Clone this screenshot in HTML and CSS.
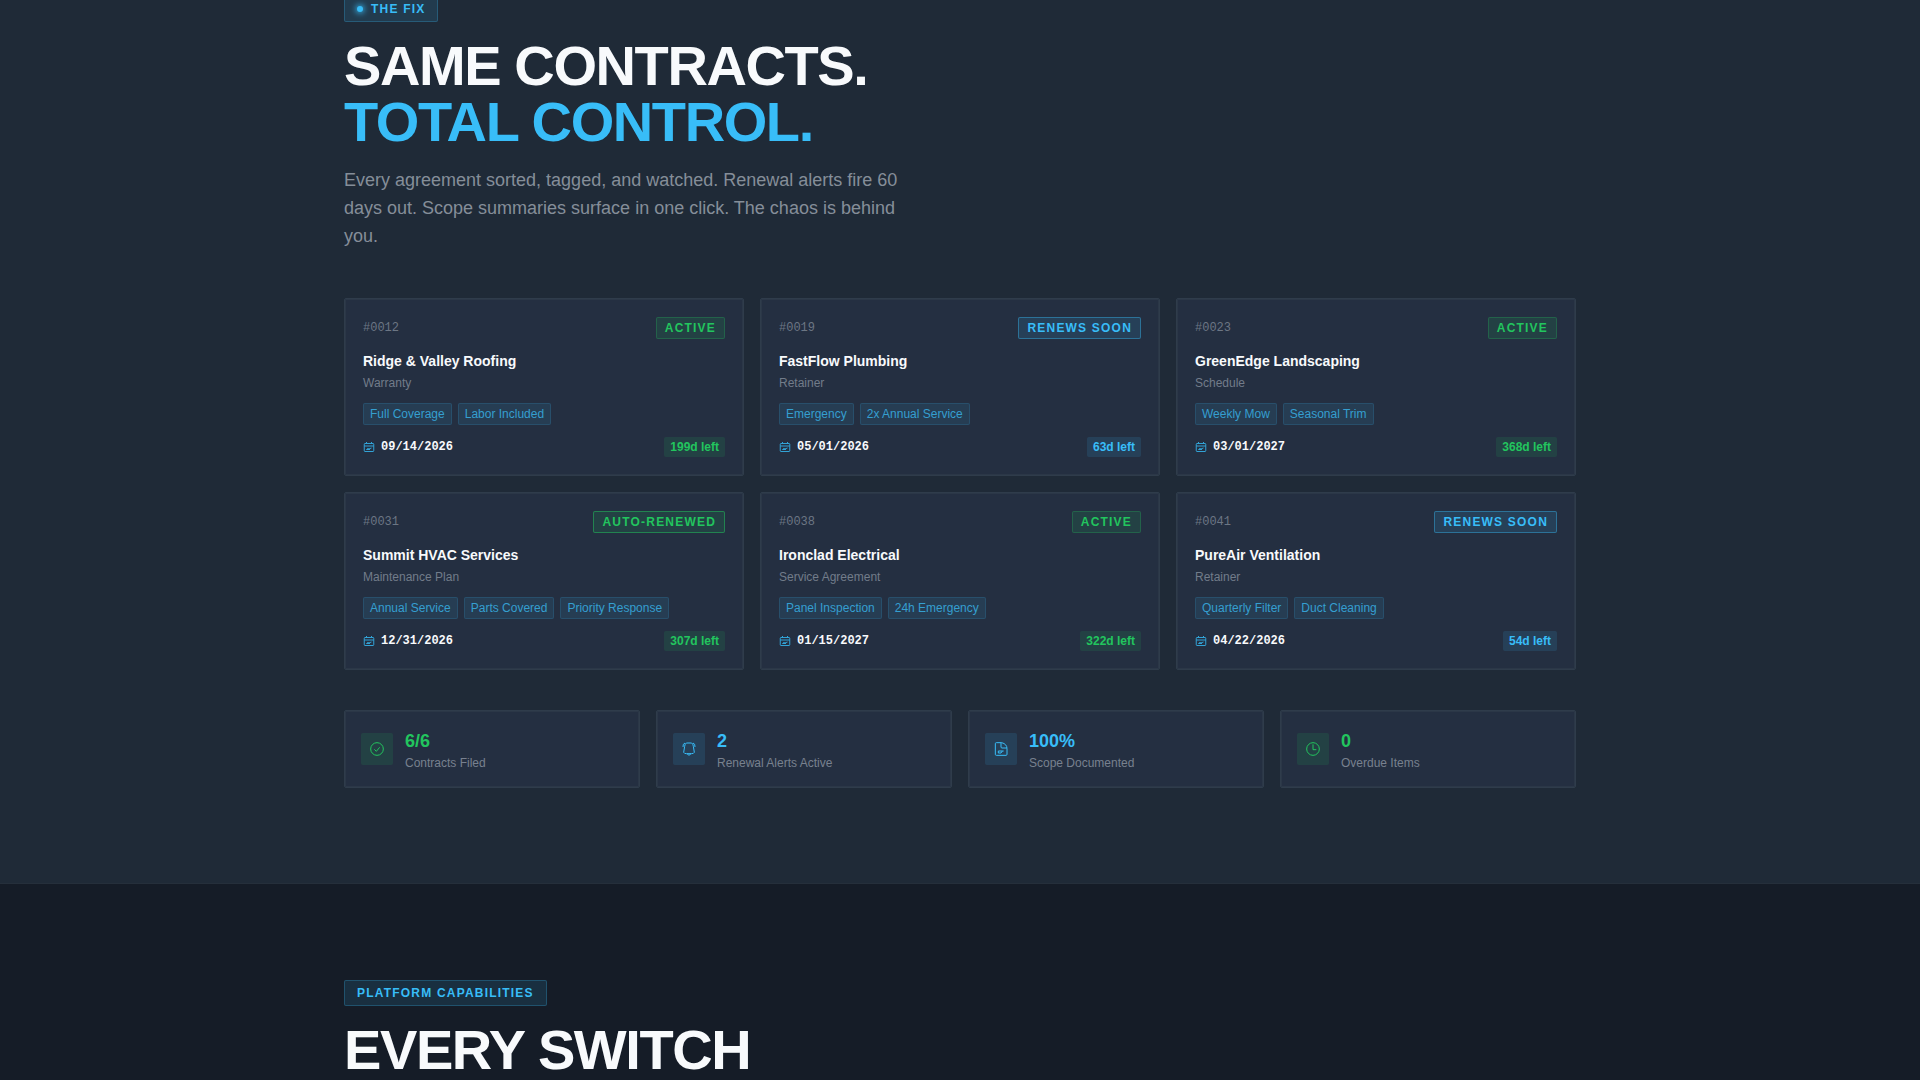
FILE: index.html
```html
<!DOCTYPE html>
<html lang="en">
<head>
<meta charset="UTF-8">
<meta name="viewport" content="width=device-width, initial-scale=1.0">
<title>Contract Control</title>
<link rel="stylesheet" href="styles.css">
</head>
<body>

<!-- shared icon -->
<svg class="sprite" aria-hidden="true">
  <symbol id="calendar" viewBox="0 0 24 24">
    <path d="M4 5h16q1.500 0 1.500 1.500v13q0 1.500-1.500 1.500H4q-1.500 0-1.500-1.500v-13Q2.500 5 4 5zM2.500 10h19M7 2v4M17 2v4M7 17q2-3 4-2t6-1M7 17h7"/>
  </symbol>
</svg>

<section class="fix">
  <div class="container">
    <span class="tag"><span class="dot"></span>THE FIX</span>
    <h2>SAME CONTRACTS.<br><span class="accent">TOTAL CONTROL.</span></h2>
    <p class="lead">Every agreement sorted, tagged, and watched. Renewal alerts fire 60 days out. Scope summaries surface in one click. The chaos is behind you.</p>

    <div class="contracts">
      <article class="card">
        <div class="card-top"><span class="id">#0012</span><span class="badge green">ACTIVE</span></div>
        <h3>Ridge &amp; Valley Roofing</h3>
        <p class="type">Warranty</p>
        <div class="scopes"><span>Full Coverage</span><span>Labor Included</span></div>
        <div class="card-bottom">
          <span class="date"><svg><use href="#calendar"/></svg>09/14/2026</span>
          <span class="days green">199d left</span>
        </div>
      </article>

      <article class="card">
        <div class="card-top"><span class="id">#0019</span><span class="badge blue">RENEWS SOON</span></div>
        <h3>FastFlow Plumbing</h3>
        <p class="type">Retainer</p>
        <div class="scopes"><span>Emergency</span><span>2x Annual Service</span></div>
        <div class="card-bottom">
          <span class="date"><svg><use href="#calendar"/></svg>05/01/2026</span>
          <span class="days blue">63d left</span>
        </div>
      </article>

      <article class="card">
        <div class="card-top"><span class="id">#0023</span><span class="badge green">ACTIVE</span></div>
        <h3>GreenEdge Landscaping</h3>
        <p class="type">Schedule</p>
        <div class="scopes"><span>Weekly Mow</span><span>Seasonal Trim</span></div>
        <div class="card-bottom">
          <span class="date"><svg><use href="#calendar"/></svg>03/01/2027</span>
          <span class="days green">368d left</span>
        </div>
      </article>

      <article class="card">
        <div class="card-top"><span class="id">#0031</span><span class="badge green strong">AUTO-RENEWED</span></div>
        <h3>Summit HVAC Services</h3>
        <p class="type">Maintenance Plan</p>
        <div class="scopes"><span>Annual Service</span><span>Parts Covered</span><span>Priority Response</span></div>
        <div class="card-bottom">
          <span class="date"><svg><use href="#calendar"/></svg>12/31/2026</span>
          <span class="days green">307d left</span>
        </div>
      </article>

      <article class="card">
        <div class="card-top"><span class="id">#0038</span><span class="badge green">ACTIVE</span></div>
        <h3>Ironclad Electrical</h3>
        <p class="type">Service Agreement</p>
        <div class="scopes"><span>Panel Inspection</span><span>24h Emergency</span></div>
        <div class="card-bottom">
          <span class="date"><svg><use href="#calendar"/></svg>01/15/2027</span>
          <span class="days green">322d left</span>
        </div>
      </article>

      <article class="card">
        <div class="card-top"><span class="id">#0041</span><span class="badge blue">RENEWS SOON</span></div>
        <h3>PureAir Ventilation</h3>
        <p class="type">Retainer</p>
        <div class="scopes"><span>Quarterly Filter</span><span>Duct Cleaning</span></div>
        <div class="card-bottom">
          <span class="date"><svg><use href="#calendar"/></svg>04/22/2026</span>
          <span class="days blue">54d left</span>
        </div>
      </article>
    </div>

    <div class="stats">
      <div class="stat">
        <span class="stat-icon green"><svg viewBox="0 0 24 24"><circle cx="12" cy="12" r="9.500"/><path d="M8 12.500l3 3 5-6"/></svg></span>
        <div><strong class="green-text">6/6</strong><span class="label">Contracts Filed</span></div>
      </div>
      <div class="stat">
        <span class="stat-icon blue"><svg viewBox="0 0 24 24"><path d="M8 3h8q2 1 2.500 5l1.500 9q-1 2-4 2H8q-3 0-4-2l1.500-9Q6 4 8 3zM9 19l3 2.500 3-2.500M6 3Q2.500 4 3 9M18 3q3.500 1 3 6"/></svg></span>
        <div><strong class="blue-text">2</strong><span class="label">Renewal Alerts Active</span></div>
      </div>
      <div class="stat">
        <span class="stat-icon blue"><svg viewBox="0 0 24 24"><path d="M5 2.500h8q8 2 8 9V20q0 1.500-1.500 1.500H5q-1.500 0-1.500-1.500V4q0-1.500 1.500-1.500zM12 2.500V9q0 1.500 1.500 1.500H21M8 18v-3h8M8 18h4l2-3"/></svg></span>
        <div><strong class="blue-text">100%</strong><span class="label">Scope Documented</span></div>
      </div>
      <div class="stat">
        <span class="stat-icon green"><svg viewBox="0 0 24 24"><circle cx="12" cy="12" r="9.500"/><path d="M12 5v8h5"/></svg></span>
        <div><strong class="green-text">0</strong><span class="label">Overdue Items</span></div>
      </div>
    </div>
  </div>
</section>

<section class="features">
  <div class="container">
    <span class="tag">PLATFORM CAPABILITIES</span>
    <h2>EVERY SWITCH</h2>
  </div>
</section>

</body>
</html>
```

FILE: styles.css
```css
* {
  box-sizing: border-box;
  margin: 0;
  padding: 0;
}

body {
  font-family: "Liberation Sans", Arial, sans-serif;
  font-size: 12px;
  background-color: #151c27;
  color: #f8fafc;
  min-height: 100vh;
  overflow-x: hidden;
}

.sprite {
  position: absolute;
  width: 0;
  height: 0;
}

svg {
  fill: none;
  stroke: currentColor;
  stroke-width: 2;
}

.container {
  max-width: 1280px;
  margin: 0 auto;
  padding: 0 24px;
}

.fix {
  background-color: #1f2a37;
  border-bottom: 1px solid #252f3b;
  padding-bottom: 95px;
  /* tag is tucked under the top edge */
  margin-top: -4px;
}

.features {
  padding-top: 96px;
}

/* Section headings */
.tag {
  display: flex;
  align-items: center;
  gap: 8px;
  width: fit-content;
  padding: 4px 12px;
  line-height: 16px;
  font-weight: bold;
  letter-spacing: 0.1em;
  color: #38bdf8;
  background-color: rgba(56, 189, 248, 0.12);
  border: 1px solid rgba(56, 189, 248, 0.25);
  border-radius: 2px;
}

.dot {
  width: 6px;
  height: 6px;
  border-radius: 50%;
  background-color: #38bdf8;
  box-shadow: 0 0 6px 1px #38bdf8;
}

h2 {
  margin-top: 16px;
  font-size: 56px;
  line-height: 56px;
  letter-spacing: -0.025em;
}

.accent {
  color: #38bdf8;
}

.lead {
  max-width: 560px;
  margin: 16px 0 48px;
  font-size: 18px;
  line-height: 28px;
  color: #858e99;
}

/* Contract cards */
.contracts {
  display: grid;
  grid-template-columns: repeat(3, 1fr);
  gap: 16px;
}

.card,
.stat {
  background-color: #242f41;
  border: 1px solid #2f3c4b;
  border-radius: 2px;
  box-shadow: inset 0 0 0 1px #2b3747;
}

.card {
  padding: 18px;
}

.card-top,
.card-bottom {
  display: flex;
  justify-content: space-between;
  align-items: center;
}

.id {
  font-family: "Liberation Mono", monospace;
  color: #6c7684;
}

.badge {
  padding: 2px 8px;
  line-height: 16px;
  font-weight: bold;
  letter-spacing: 0.1em;
  border: 1px solid;
  border-radius: 2px;
}

.green {
  color: #22c55e;
  background-color: rgba(34, 197, 94, 0.12);
  border-color: rgba(34, 197, 94, 0.25);
}

.blue {
  color: #38bdf8;
  background-color: rgba(56, 189, 248, 0.13);
  border-color: rgba(56, 189, 248, 0.4);
}

.strong {
  border-color: rgba(34, 197, 94, 0.5);
}

h3 {
  margin-top: 12px;
  font-size: 14px;
  line-height: 20px;
}

.type {
  margin: 2px 0 10px;
  line-height: 20px;
  color: #727c8a;
}

.scopes {
  display: flex;
  flex-wrap: wrap;
  gap: 6px;
  margin-bottom: 12px;
}

.scopes span {
  padding: 2px 6px;
  line-height: 16px;
  color: #359fd0;
  background-color: rgba(56, 189, 248, 0.1);
  border: 1px solid rgba(56, 189, 248, 0.15);
  border-radius: 2px;
}

.date {
  display: flex;
  align-items: center;
  gap: 6px;
  font-family: "Liberation Mono", monospace;
  font-weight: bold;
}

.date svg {
  width: 12px;
  height: 12px;
  color: #32a3d6;
}

.days {
  padding: 2px 6px;
  line-height: 16px;
  font-weight: bold;
  border-radius: 2px;
}

/* Stats row */
.stats {
  display: grid;
  grid-template-columns: repeat(4, 1fr);
  gap: 16px;
  margin-top: 40px;
}

.stat {
  display: flex;
  align-items: center;
  gap: 12px;
  padding: 16px;
}

.stat-icon {
  display: flex;
  align-items: center;
  justify-content: center;
  width: 32px;
  height: 32px;
  border-radius: 2px;
}

.stat-icon svg {
  width: 16px;
  height: 16px;
  stroke-width: 1.5;
}

.stat strong {
  display: block;
  font-size: 18px;
  line-height: 28px;
}

.green-text {
  color: #22c55e;
}

.blue-text {
  color: #38bdf8;
}

.label {
  display: block;
  line-height: 16px;
  color: #78818f;
}
```
